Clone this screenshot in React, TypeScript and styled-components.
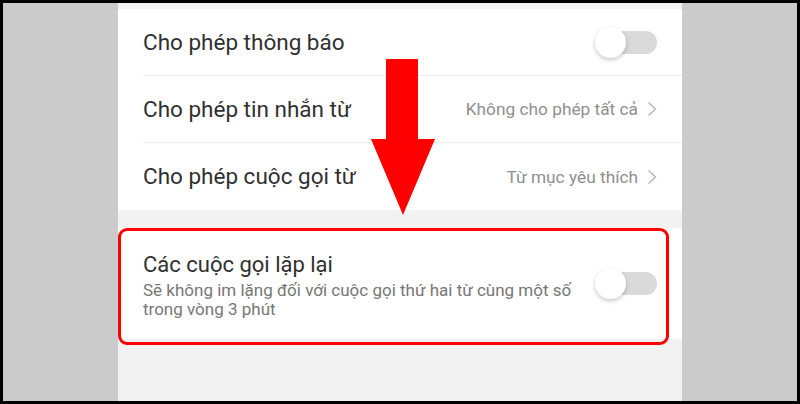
import React from "react";
import styled, { createGlobalStyle } from "styled-components";

const Global = createGlobalStyle`
  html, body { margin: 0; padding: 0; background: #000; }
  body { font-family: Roboto, "Noto Sans", "Liberation Sans", sans-serif; }
`;

const Frame = styled.div`
  position: relative;
  width: 800px;
  height: 404px;
  box-sizing: border-box;
  border: 3px solid #000;
  display: flex;
  overflow: hidden;
  background: #000;
`;

const Side = styled.div`
  width: 115px;
  background: #cbcbcb;
  flex: none;
`;

const Phone = styled.div`
  width: 564px;
  flex: none;
  background: #f2f2f2;
  display: flex;
  flex-direction: column;
  padding-top: 6px;
`;

const Section = styled.div`
  background: #fff;
  display: flex;
  flex-direction: column;
`;

const Row = styled.div<{ $last?: boolean }>`
  height: 67px;
  box-sizing: border-box;
  margin-left: 25px;
  padding-right: 25px;
  display: flex;
  align-items: center;
  justify-content: space-between;
  border-bottom: ${(p) => (p.$last ? "none" : "1px solid #ececec")};
`;

const Label = styled.div`
  font-size: 22.5px;
  color: #303030;
  padding-bottom: 1px;
`;

const Value = styled.div`
  display: flex;
  align-items: center;
  gap: 9px;
  font-size: 17.3px;
  color: #8f8f8f;
`;

const Card = styled.div`
  margin-top: 18px;
  height: 111px;
  background: #fff;
  box-sizing: border-box;
  padding: 0 25px;
  display: flex;
  align-items: center;
  justify-content: space-between;
`;

const CardText = styled.div`
  width: 445px;
  display: flex;
  flex-direction: column;
  padding-top: 4px;
`;

const CardTitle = styled.div`
  font-size: 22px;
  color: #303030;
  line-height: 26px;
  margin-bottom: 3px;
`;

const CardSub = styled.div`
  font-size: 17px;
  color: #777;
  line-height: 19px;
`;

const Toggle = styled.div`
  position: relative;
  width: 62px;
  height: 31px;
  flex: none;
`;

const Track = styled.div`
  position: absolute;
  left: 10px;
  right: 0;
  top: 4px;
  height: 23px;
  border-radius: 12px;
  background: #dadada;
`;

const Thumb = styled.div`
  position: absolute;
  left: 0;
  top: 0;
  width: 31px;
  height: 31px;
  border-radius: 50%;
  background: #fff;
  box-shadow: 0 2px 4px rgba(0, 0, 0, 0.22);
`;

const Highlight = styled.div`
  position: absolute;
  left: 115px;
  top: 225px;
  width: 551px;
  height: 117px;
  box-sizing: border-box;
  border: 3px solid #ff0000;
  border-radius: 9px;
  pointer-events: none;
`;

const Arrow = styled.svg`
  position: absolute;
  left: 365px;
  top: 56px;
  pointer-events: none;
`;

const Chevron = () => (
  <svg width="10" height="16" viewBox="0 0 10 16">
    <path d="M1.5 1.5 L8.5 8 L1.5 14.5" fill="none" stroke="#b5b5b5" strokeWidth="1.4" />
  </svg>
);

const Switch = () => (
  <Toggle>
    <Track />
    <Thumb />
  </Toggle>
);

export default function App() {
  return (
    <>
      <Global />
      <Frame>
        <Side />
        <Phone>
          <Section>
            <Row>
              <Label>Cho phép thông báo</Label>
              <Switch />
            </Row>
            <Row>
              <Label>Cho phép tin nhắn từ</Label>
              <Value>
                Không cho phép tất cả
                <Chevron />
              </Value>
            </Row>
            <Row $last>
              <Label>Cho phép cuộc gọi từ</Label>
              <Value>
                Từ mục yêu thích
                <Chevron />
              </Value>
            </Row>
          </Section>
          <Card>
            <CardText>
              <CardTitle>Các cuộc gọi lặp lại</CardTitle>
              <CardSub>Sẽ không im lặng đối với cuộc gọi thứ hai từ cùng một số trong vòng 3 phút</CardSub>
            </CardText>
            <Switch />
          </Card>
        </Phone>
        <Side />
        <Highlight />
        <Arrow width="70" height="160" viewBox="0 0 70 160">
          <polygon points="18,0 50,0 50,80 67,80 35,156 3,80 18,80" fill="#ff0000" />
        </Arrow>
      </Frame>
    </>
  );
}
